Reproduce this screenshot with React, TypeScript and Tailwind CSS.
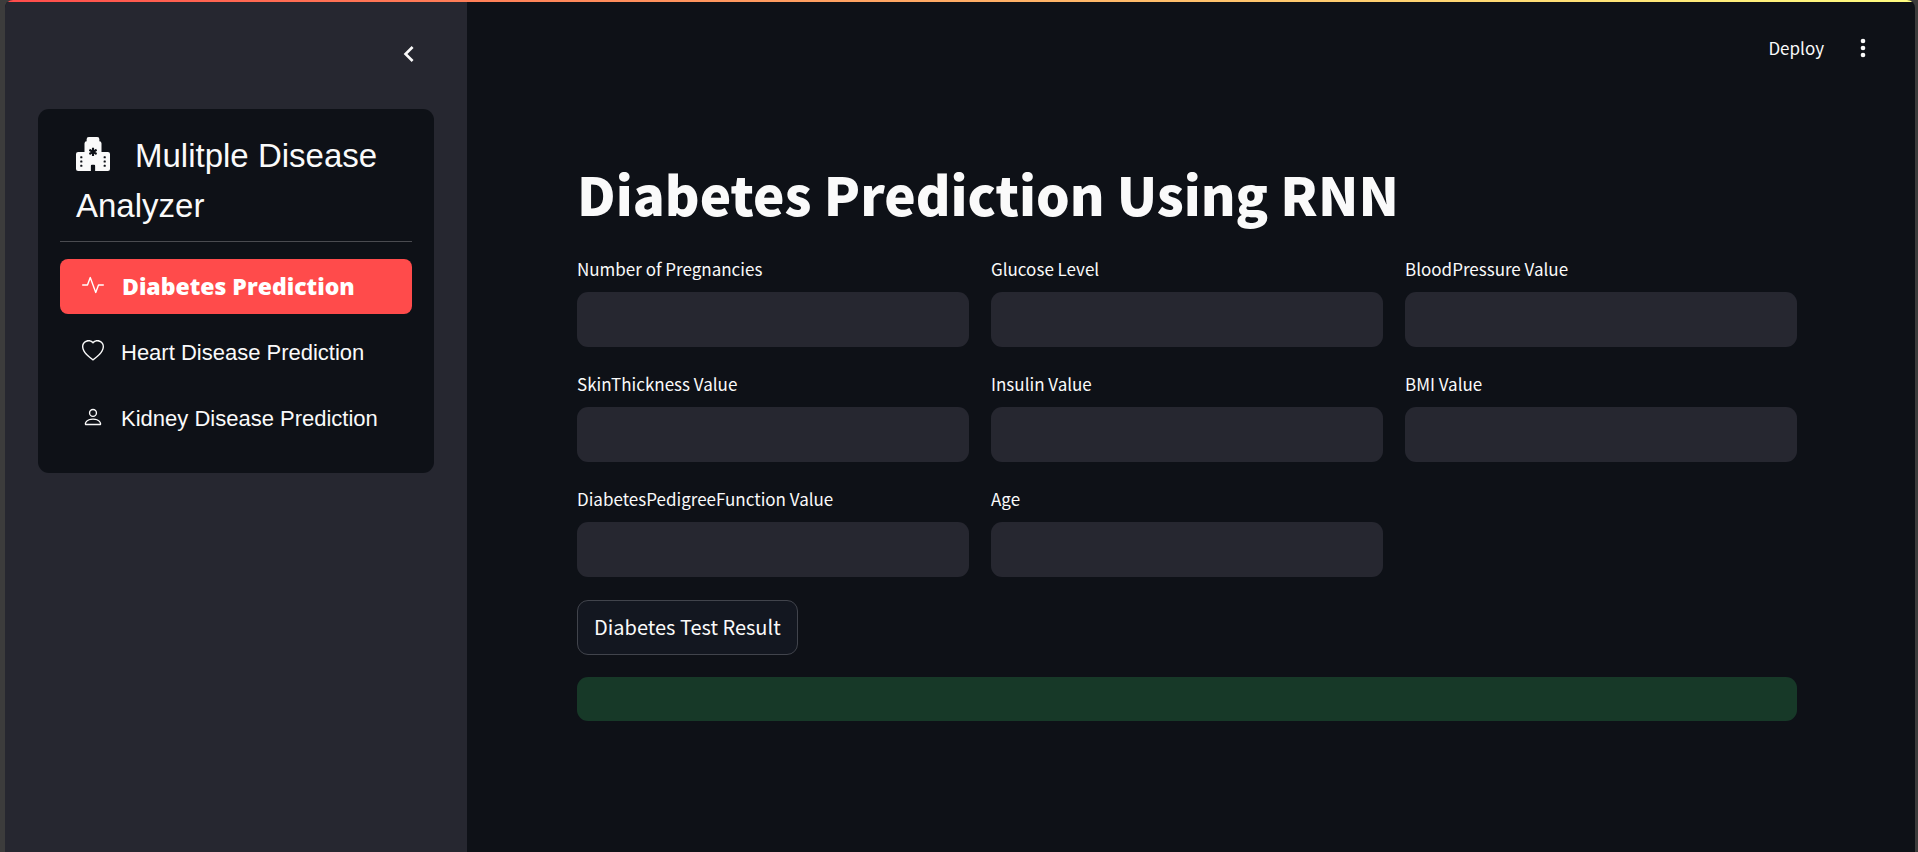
import { useState } from "react";
import { BsActivity, BsHeart, BsHospitalFill, BsPerson } from "react-icons/bs";
import type { IconType } from "react-icons";

const navItems: { label: string; icon: IconType }[] = [
  { label: "Diabetes Prediction", icon: BsActivity },
  { label: "Heart Disease Prediction", icon: BsHeart },
  { label: "Kidney Disease Prediction", icon: BsPerson },
];

const fields = [
  { id: "pregnancies", label: "Number of Pregnancies" },
  { id: "glucose", label: "Glucose Level" },
  { id: "blood-pressure", label: "BloodPressure Value" },
  { id: "skin-thickness", label: "SkinThickness Value" },
  { id: "insulin", label: "Insulin Value" },
  { id: "bmi", label: "BMI Value" },
  { id: "pedigree", label: "DiabetesPedigreeFunction Value" },
  { id: "age", label: "Age" },
];

function Sidebar() {
  const [active, setActive] = useState(0);
  return (
    <aside className="w-[462px] shrink-0 bg-[#262730] px-[33px]">
      <div className="mb-[3px] flex h-[104px] items-center justify-end pr-[9px]">
        <button type="button" aria-label="Collapse sidebar" className="flex size-[32px] items-center justify-center">
          <svg viewBox="0 0 24 24" className="size-[32px] fill-[#fafafa]" aria-hidden="true">
            <path d="M15.41 7.41 14 6l-6 6 6 6 1.41-1.41L10.83 12z" />
          </svg>
        </button>
      </div>
      <div className="rounded-[11px] bg-[#0e1117] px-[22px] pt-[22px] pb-[27px] font-['Liberation_Sans',Arial,sans-serif] text-[#fafafa]">
        <h2 className="px-[16px] text-[33px] leading-[50px]">
          <BsHospitalFill className="mr-[25px] inline size-[34px] align-[-4px]" aria-hidden="true" />
          Mulitple Disease Analyzer
        </h2>
        <hr className="mt-[10px] mb-[17px] border-[#4a4b50]" />
        <nav className="flex flex-col gap-[11px]">
          {navItems.map(({ label, icon: Icon }, i) => (
            <a
              key={label}
              href="#"
              onClick={(e) => {
                e.preventDefault();
                setActive(i);
              }}
              className={
                i === active
                  ? "flex h-[55px] items-center gap-[18px] rounded-[8px] bg-[#ff4b4b] px-[22px] font-['Open_Sans','Arial_Black',sans-serif] text-[23px] font-extrabold text-white"
                  : "flex h-[55px] items-center gap-[17px] rounded-[8px] px-[22px] text-[22px]"
              }
            >
              <Icon className="mb-[3px] size-[22px] shrink-0" aria-hidden="true" />
              <span>{label}</span>
            </a>
          ))}
        </nav>
      </div>
    </aside>
  );
}

export default function App() {
  return (
    <div className="min-h-screen bg-[#3c3c3c] pr-[3px] pl-[5px] font-['Noto_Sans_CJK_SC','Source_Sans_Pro',sans-serif] text-[#fafafa]">
      <div className="flex min-h-screen flex-col overflow-hidden rounded-t-[8px] bg-[#0e1117]">
        <div className="h-[2px] bg-linear-to-r from-[#ff4b4b] to-[#fffd80]" />
        <div className="flex flex-1">
          <Sidebar />
          <div className="min-w-0 flex-1">
            <header className="flex h-[92px] items-center justify-end gap-[25px] pr-[38px]">
              <button type="button" className="text-[17px]">Deploy</button>
              <button type="button" aria-label="Main menu" className="flex size-[28px] items-center justify-center">
                <svg viewBox="0 0 24 24" className="size-[28px] fill-[#fafafa]" aria-hidden="true">
                  <circle cx="12" cy="6" r="2" />
                  <circle cx="12" cy="12" r="2" />
                  <circle cx="12" cy="18" r="2" />
                </svg>
              </button>
            </header>
            <main className="pt-[63px] pr-[118px] pl-[110px]">
              <h1 className="text-[53px] leading-[72px] font-black">Diabetes Prediction Using RNN</h1>
              <form onSubmit={(e) => e.preventDefault()}>
                <div className="mt-[25px] grid grid-cols-3 gap-[22px]">
                  {fields.map(({ id, label }) => (
                    <div key={id}>
                      <label htmlFor={id} className="mb-[8px] block text-[17px] leading-[30px]">
                        {label}
                      </label>
                      <input
                        id={id}
                        type="text"
                        className="block h-[55px] w-full rounded-[11px] bg-[#262730] px-[16px] text-[20px] outline-none"
                      />
                    </div>
                  ))}
                </div>
                <button
                  type="submit"
                  className="mt-[23px] h-[55px] rounded-[11px] border border-[#41444c] bg-[#131720] px-[16px] pb-[2px] text-[20px]"
                >
                  Diabetes Test Result
                </button>
              </form>
              <div role="status" className="mt-[22px] h-[44px] rounded-[11px] bg-[#173928]" />
            </main>
          </div>
        </div>
      </div>
    </div>
  );
}
